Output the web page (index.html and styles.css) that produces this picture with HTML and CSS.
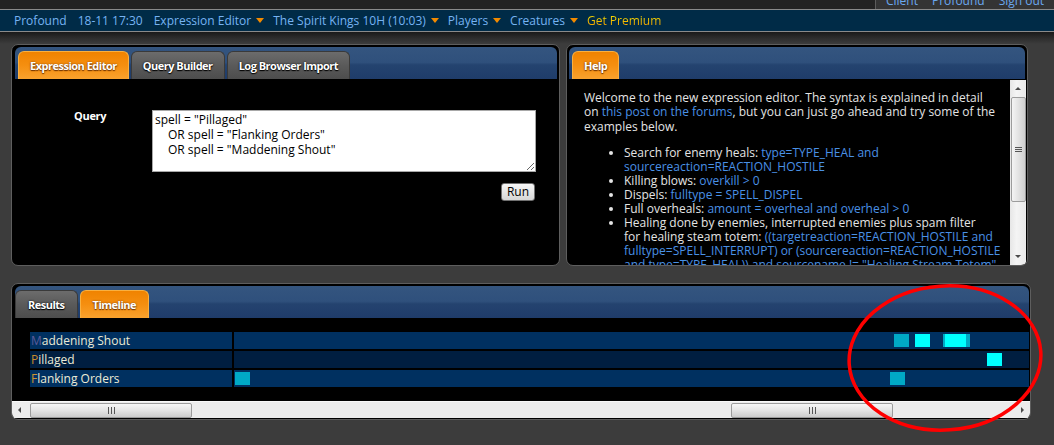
FILE: index.html
```html
<!DOCTYPE html>
<html>
<head>
<meta charset="utf-8">
<title>Expression Editor</title>
<link rel="stylesheet" href="styles.css">
</head>
<body>
<div class="topstrip">
  <div class="account">
    <span class="acc-link">Client</span>
    <span class="acc-link">Profound</span>
    <span class="acc-link">Sign out</span>
  </div>
</div>
<nav class="navbar">
  <span class="nav-item">Profound</span>
  <span class="nav-item">18-11 17:30</span>
  <span class="nav-item">Expression Editor</span><span class="caret"></span>
  <span class="nav-item">The Spirit Kings 10H (10:03)</span><span class="caret"></span>
  <span class="nav-item">Players</span><span class="caret"></span>
  <span class="nav-item">Creatures</span><span class="caret"></span>
  <span class="nav-item premium">Get Premium</span>
</nav>
<div class="shade"></div>
<main class="content">
  <div class="top-row">
    <section class="panel panel-editor">
      <div class="panel-head">
        <div class="tab active">Expression Editor</div>
        <div class="tab">Query Builder</div>
        <div class="tab">Log Browser Import</div>
      </div>
      <div class="editor-body">
        <div class="query-label">Query</div>
        <div class="query-field">
          <textarea class="query-input" spellcheck="false">spell = "Pillaged"
&#9;OR spell = "Flanking Orders"
&#9;OR spell = "Maddening Shout"</textarea>
          <div class="run-row"><button class="run-btn">Run</button></div>
        </div>
      </div>
    </section>
    <section class="panel panel-help">
      <div class="panel-head">
        <div class="tab active">Help</div>
      </div>
      <div class="help-body">
        <div class="help-text">
          <p class="help-intro">Welcome to the new expression editor. The syntax is explained in detail<br>on <a class="link">this post on the forums</a>, but you can just go ahead and try some of the<br>examples below.</p>
          <ul class="help-list">
            <li>Search for enemy heals: <span class="code">type=TYPE_HEAL and<br>sourcereaction=REACTION_HOSTILE</span></li>
            <li>Killing blows: <span class="code">overkill &gt; 0</span></li>
            <li>Dispels: <span class="code">fulltype = SPELL_DISPEL</span></li>
            <li>Full overheals: <span class="code">amount = overheal and overheal &gt; 0</span></li>
            <li>Healing done by enemies, interrupted enemies plus spam filter<br>for healing steam totem: <span class="code">((targetreaction=REACTION_HOSTILE and<br>fulltype=SPELL_INTERRUPT) or (sourcereaction=REACTION_HOSTILE<br>and type=TYPE_HEAL)) and sourcename != "Healing Stream Totem"</span></li>
            <li>Damage taken by players: <span class="code">targettype = PLAYER and type = TYPE_DAMAGE</span></li>
          </ul>
        </div>
        <div class="vscroll">
          <div class="arrow arrow-up"></div>
          <div class="vthumb"><span class="grip-h"></span></div>
          <div class="vspace"></div>
          <div class="arrow arrow-down"></div>
        </div>
      </div>
    </section>
  </div>

  <section class="panel panel-timeline">
    <div class="panel-head">
      <div class="tab">Results</div>
      <div class="tab active">Timeline</div>
    </div>
    <div class="timeline">
      <div class="tl-row">
        <div class="tl-label"><span class="c-m">M</span>addening Shout</div>
        <div class="tl-track">
          <span class="ev dim" style="left:660px;width:15px"></span>
          <span class="ev bright" style="left:681px;width:15px"></span>
          <span class="ev dim" style="left:709px;width:27px"></span>
          <span class="ev bright" style="left:711px;width:21px"></span>
        </div>
      </div>
      <div class="tl-row alt">
        <div class="tl-label"><span class="c-p">P</span>illaged</div>
        <div class="tl-track">
          <span class="ev bright" style="left:753px;width:15px"></span>
        </div>
      </div>
      <div class="tl-row">
        <div class="tl-label"><span class="c-f">F</span>lanking Orders</div>
        <div class="tl-track">
          <span class="ev dim" style="left:1px;width:15px"></span>
          <span class="ev dim" style="left:656px;width:15px"></span>
        </div>
      </div>
    </div>
    <div class="hscroll">
      <div class="arrow arrow-left"></div>
      <div class="hthumb first"><span class="grip-v"></span></div>
      <div class="hthumb second"><span class="grip-v"></span></div>
      <div class="hspace"></div>
      <div class="arrow arrow-right"></div>
    </div>
  </section>
</main>

<svg class="annotation" width="200" height="154" viewBox="0 0 200 154">
  <ellipse cx="99" cy="75" rx="96" ry="72" fill="none" stroke="#ff0000" stroke-width="3.5" transform="rotate(-4 99 75)"/>
</svg>
</body>
</html>
```

FILE: styles.css
```css
* { box-sizing: border-box; }

body {
  margin: 0;
  height: 445px;
  overflow: hidden;
  position: relative;
  background: #3c3c3c;
  font-family: "Open Sans", "Noto Sans", sans-serif;
  font-size: 12px;
  color: #e6e6e6;
}

/* top strip with account links */
.topstrip {
  height: 9px;
  background: #232323;
  display: flex;
  justify-content: flex-end;
}
.account {
  width: 179px;
  background: #343434;
  border-left: 1px solid #5c5c5c;
  display: flex;
  padding-left: 10px;
  gap: 14px;
  overflow: hidden;
}
.acc-link {
  color: #6aa8f0;
  font-size: 12px;
  line-height: 12px;
  margin-top: -5px;
  white-space: nowrap;
}

/* nav bar */
.navbar {
  height: 23px;
  background: #002b47;
  border-top: 1px solid #8a8a8a;
  border-bottom: 1px solid #8a8a8a;
  display: flex;
  align-items: center;
  padding-left: 14px;
  color: #76b3f3;
  font-size: 12px;
  white-space: nowrap;
}
.nav-item + .nav-item { margin-left: 11px; }
.caret {
  width: 0;
  height: 0;
  margin-left: 5px;
  border-left: 4px solid transparent;
  border-right: 4px solid transparent;
  border-top: 5px solid #f28a00;
}
.caret + .nav-item { margin-left: 9px; }
.premium {
  color: #f2c000;
  background: linear-gradient(#f7d400 35%, #f09000 95%);
  -webkit-background-clip: text;
  background-clip: text;
  -webkit-text-fill-color: transparent;
}

.shade {
  height: 12px;
  background: linear-gradient(#191919, #2c2c2c 50%, #3c3c3c);
}

/* layout */
.content {
  padding-left: 11px;
}
.top-row {
  display: flex;
  gap: 6px;
}

.panel {
  background: #000;
  border: 1px solid #5e5e5e;
  border-radius: 7px;
  overflow: hidden;
}
.panel-editor { width: 549px; height: 222px; }
.panel-help { width: 462px; height: 222px; }
.panel-timeline {
  width: 1020px;
  margin-top: 17px;
  height: 137px;
}

.panel-head {
  height: 32px;
  margin: 2px 2px 0 3px;
  border-radius: 6px 6px 0 0;
  background: linear-gradient(#34557f 0%, #2f507c 48%, #24436f 56%, #1f3c6a 100%);
  display: flex;
  align-items: flex-end;
  padding-left: 3px;
  gap: 2px;
}
.panel-timeline .panel-head { margin-right: 1px; padding-left: 0; }
.panel-help .panel-head { padding-left: 3px; margin-left: 2px; }

.tab {
  height: 28px;
  line-height: 27px;
  padding: 0 11px;
  border-radius: 6px 6px 0 0;
  font-size: 11px;
  font-weight: 700;
  letter-spacing: -0.5px;
  color: #ffffff;
  text-shadow: 0 0 2px #000, 0 1px 1px #000;
  background: linear-gradient(#6c6c6c, #5a5a5a 50%, #4d4d4d);
  border: 1px solid #3a3a3a;
  border-bottom: none;
  white-space: nowrap;
}
.panel-timeline .tab { padding: 0 12px; }
.tab.active {
  background: linear-gradient(#f08300, #f58f10 50%, #f9a22e);
  border-color: #f9b040;
  text-shadow: 0 0 2px #7a3a00, 0 1px 1px #6a3000;
}

/* editor */
.editor-body {
  display: grid;
  grid-template-columns: 140px 384px;
  padding-top: 31px;
}
.query-label {
  padding-left: 62px;
  font-weight: 700;
  font-size: 11px;
  letter-spacing: -0.3px;
  color: #fff;
  line-height: 12px;
}
.query-field {
  display: flex;
  flex-direction: column;
}
.query-input {
  width: 384px;
  height: 62px;
  margin: 0;
  padding: 1px 2px;
  border: 1px solid #a8a8a8;
  background: #fff;
  color: #000;
  font-family: "Open Sans", "Noto Sans", sans-serif;
  font-size: 12px;
  line-height: 15px;
  tab-size: 13px;
  resize: both;
  outline: none;
}
.run-row {
  display: flex;
  justify-content: flex-end;
  padding-top: 11px;
  padding-right: 1px;
}
.run-btn {
  width: 34px;
  height: 18px;
  padding: 0;
  font-family: "Open Sans", "Noto Sans", sans-serif;
  font-size: 12px;
  line-height: 14px;
  color: #000;
  background: linear-gradient(#f6f6f6, #e6e6e6 50%, #d6d6d6);
  border: 1px solid #707070;
  border-radius: 3px;
}

/* help */
.help-body {
  display: flex;
  height: 186px;
  margin-right: 1px;
}
.help-text {
  flex: 1;
  overflow: hidden;
  padding: 12px 0 0 17px;
  font-size: 12px;
  line-height: 14.3px;
  color: #e4e4e4;
  white-space: nowrap;
}
.help-intro { margin: 0; }
.link, .code { color: #4a91e6; }
.help-list {
  margin: 12px 0 0;
  padding-left: 40px;
  line-height: 14px;
}
.vscroll {
  width: 16px;
  margin-top: 1px;
  background: linear-gradient(90deg, #e6e6e6, #f4f4f4 40%, #eaeaea);
  display: flex;
  flex-direction: column;
  align-items: center;
}
.arrow { width: 0; height: 0; flex: none; }
.arrow-up {
  margin: 7px 0 6px;
  border-left: 3px solid transparent;
  border-right: 3px solid transparent;
  border-bottom: 3px solid #4a4a4a;
}
.arrow-down {
  margin: 6px 0 7px;
  border-left: 3px solid transparent;
  border-right: 3px solid transparent;
  border-top: 3px solid #4a4a4a;
}
.vthumb {
  width: 15px;
  height: 105px;
  margin-top: 1px;
  border: 1px solid #9c9c9c;
  border-radius: 2px;
  background: linear-gradient(90deg, #f4f4f4, #e2e2e2 50%, #cfcfcf);
  display: flex;
  align-items: center;
  justify-content: center;
}
.grip-h {
  width: 7px;
  height: 5px;
  border-top: 1px solid #555;
  border-bottom: 1px solid #555;
  background: linear-gradient(#fff0 40%, #555 40%, #555 60%, #fff0 60%);
}
.vspace { flex: 1; }

/* timeline */
.timeline {
  padding: 14px 0 0 18px;
  display: flex;
  flex-direction: column;
  gap: 2px;
}
.tl-row {
  display: grid;
  grid-template-columns: 202px 795px;
  gap: 2px;
  height: 17px;
}
.tl-label, .tl-track { background: #003060; }
.tl-row.alt .tl-label, .tl-row.alt .tl-track { background: #001e40; }
.tl-label {
  padding-left: 1px;
  font-size: 12px;
  line-height: 17px;
  color: #ecebd6;
  white-space: nowrap;
}
.c-m { color: #5c5a98; }
.c-p { color: #c78c2c; }
.c-f { color: #c99434; }
.tl-track { position: relative; }
.ev {
  position: absolute;
  top: 2px;
  height: 13px;
}
.ev.dim { background: #00a9c6; }
.ev.bright { background: #00ffff; }

.hscroll {
  margin-top: 14px;
  height: 17px;
  background: #ececec;
  border-top: 1px solid #f8f8f8;
  display: flex;
  align-items: center;
}
.arrow-left {
  margin-left: 6px;
  border-top: 3px solid transparent;
  border-bottom: 3px solid transparent;
  border-right: 3px solid #4a4a4a;
}
.arrow-right {
  margin-right: 6px;
  border-top: 3px solid transparent;
  border-bottom: 3px solid transparent;
  border-left: 3px solid #4a4a4a;
}
.hthumb {
  height: 15px;
  width: 162px;
  border: 1px solid #9c9c9c;
  border-radius: 2px;
  background: linear-gradient(#f6f6f6, #e4e4e4 50%, #cccccc);
  display: flex;
  align-items: center;
  justify-content: center;
}
.hthumb.first { margin-left: 9px; }
.hthumb.second { margin-left: 539px; }
.grip-v {
  width: 7px;
  height: 7px;
  border-left: 1px solid #555;
  border-right: 1px solid #555;
  background: linear-gradient(90deg, #fff0 40%, #555 40%, #555 60%, #fff0 60%);
}
.hspace { flex: 1; }

.annotation {
  position: absolute;
  left: 846px;
  top: 283px;
}
```
